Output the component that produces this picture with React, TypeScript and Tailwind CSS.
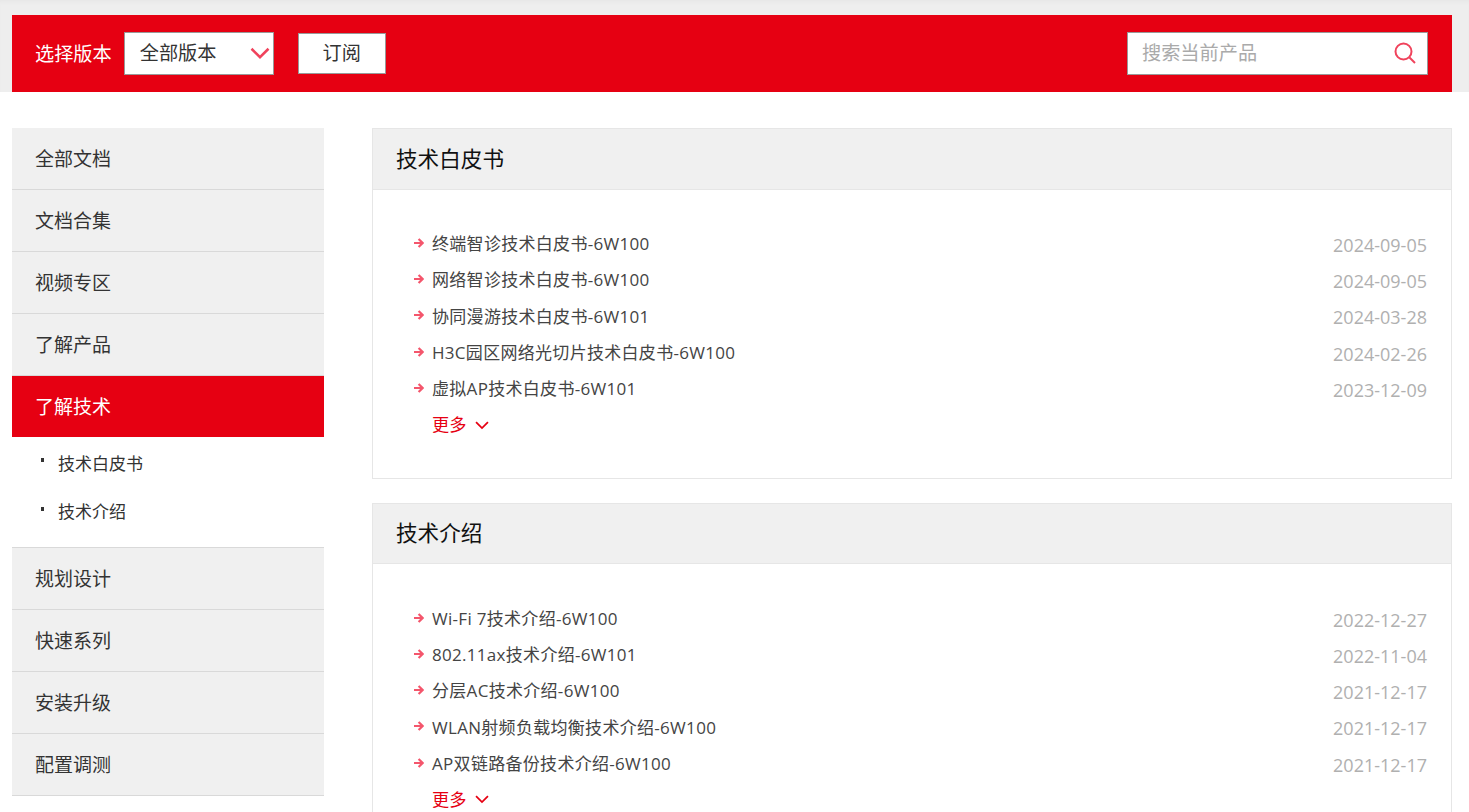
const topNav = ["全部文档", "文档合集", "视频专区", "了解产品"];
const bottomNav = ["规划设计", "快速系列", "安装升级", "配置调测"];

const whitepapers = [
  ["终端智诊技术白皮书-6W100", "2024-09-05"],
  ["网络智诊技术白皮书-6W100", "2024-09-05"],
  ["协同漫游技术白皮书-6W101", "2024-03-28"],
  ["H3C园区网络光切片技术白皮书-6W100", "2024-02-26"],
  ["虚拟AP技术白皮书-6W101", "2023-12-09"],
];

const intros = [
  ["Wi-Fi 7技术介绍-6W100", "2022-12-27"],
  ["802.11ax技术介绍-6W101", "2022-11-04"],
  ["分层AC技术介绍-6W100", "2021-12-17"],
  ["WLAN射频负载均衡技术介绍-6W100", "2021-12-17"],
  ["AP双链路备份技术介绍-6W100", "2021-12-17"],
];

function Chevron({ className }: { className: string }) {
  return (
    <svg viewBox="0 0 16 10" fill="none" className={className}>
      <path d="M1.2 1.2 8 8l6.8-6.8" stroke="currentColor" strokeWidth="2" />
    </svg>
  );
}

function Arrow() {
  return (
    <svg viewBox="0 0 10 10" fill="none" className="w-[10px] h-[10px] -mt-[2px] text-[#f4566c] shrink-0">
      <path d="M0 5H8.5M4.6 1 8.6 5 4.6 9" stroke="currentColor" strokeWidth="2.2" />
    </svg>
  );
}

function NavItem({ label }: { label: string }) {
  return (
    <div className="h-[62px] pl-[23px] flex items-center bg-[#f0f0f0] border-b border-[#d9d9d9] text-[19px] text-[#333]">
      <span className="mt-[1px]">{label}</span>
    </div>
  );
}

function SubItem({ label }: { label: string }) {
  return (
    <div className="h-[48.5px] pl-[29px] flex items-center gap-[14px] text-[17px] text-[#333]">
      <span className="w-[3px] h-[4px] bg-[#333] -mt-[6px]"></span>
      <span>{label}</span>
    </div>
  );
}

function Panel({ title, rows }: { title: string; rows: string[][] }) {
  return (
    <section className="border border-[#e6e6e6] mb-6">
      <h2 className="h-[60.6px] pl-[23px] flex items-center bg-[#f0f0f0] border-b border-[#e6e6e6] text-[21.6px] text-[#111]">
        {title}
      </h2>
      <div className="pt-[36px] pb-[34.4px] pl-[41px] pr-6">
        {rows.map(([name, date]) => (
          <div key={name} className="h-[36.3px] flex items-center text-[17px] tracking-[0.3px]">
            <Arrow />
            <span className="ml-[8px] text-[#444]">{name}</span>
            <span className="ml-auto mt-[3px] text-[18px] tracking-normal text-[#b0b0b0]">{date}</span>
          </div>
        ))}
        <div className="h-[36.3px] pl-[18px] flex items-center gap-[9px] text-[17.2px] text-[#e60012]">
          <span>更多</span>
          <Chevron className="w-[14px] h-[9px]" />
        </div>
      </div>
    </section>
  );
}

export default function App() {
  return (
    <div className="h-[812px] overflow-hidden bg-white font-['Segoe_UI','Open_Sans','Noto_Sans_CJK_SC',sans-serif]">
      <div className="bg-[#eeeeee] shadow-[inset_0_4px_4px_-2px_rgba(0,0,0,0.03)] pt-[15px] pl-3 h-[92px]">
        <div className="w-[1440px] h-[77px] bg-[#e60012] pl-[23px] pr-6 flex items-center">
          <span className="mt-[1px] text-[19.2px] text-white">选择版本</span>
          <div className="ml-[12px] w-[150px] h-[43px] bg-white border border-[#999] pl-[15px] pr-[3px] flex items-center justify-between text-[19.2px] text-[#333]">
            <span>全部版本</span>
            <Chevron className="w-[20px] h-[13px] text-[#f0435c]" />
          </div>
          <button className="ml-[24px] w-[88px] h-[41px] bg-white border border-[#999] text-[19.2px] text-[#333]">
            订阅
          </button>
          <div className="ml-auto w-[301px] h-[43px] bg-white border border-[#999] pl-[14px] pr-[11px] flex items-center justify-between">
            <span className="-mt-[1px] text-[19.2px] text-[#aaa]">搜索当前产品</span>
            <svg viewBox="0 0 22 22" fill="none" className="w-[22px] h-[22px] -mt-[1px] text-[#f0435c]">
              <circle cx="9.5" cy="9.5" r="8" stroke="currentColor" strokeWidth="2" />
              <path d="M15.5 15.5 21 21" stroke="currentColor" strokeWidth="2" />
            </svg>
          </div>
        </div>
      </div>

      <div className="mt-9 pl-3 flex gap-12">
        <aside className="w-[312px] shrink-0">
          {topNav.map((label) => (
            <NavItem key={label} label={label} />
          ))}
          <div className="h-[61px] pl-[23px] flex items-center bg-[#e60012] text-[19px] text-white">
            <span className="mt-[1px]">了解技术</span>
          </div>
          <div className="h-[111px] pt-[2px] border-b border-[#d9d9d9]">
            <SubItem label="技术白皮书" />
            <SubItem label="技术介绍" />
          </div>
          {bottomNav.map((label) => (
            <NavItem key={label} label={label} />
          ))}
        </aside>
        <main className="w-[1080px]">
          <Panel title="技术白皮书" rows={whitepapers} />
          <Panel title="技术介绍" rows={intros} />
        </main>
      </div>
    </div>
  );
}
